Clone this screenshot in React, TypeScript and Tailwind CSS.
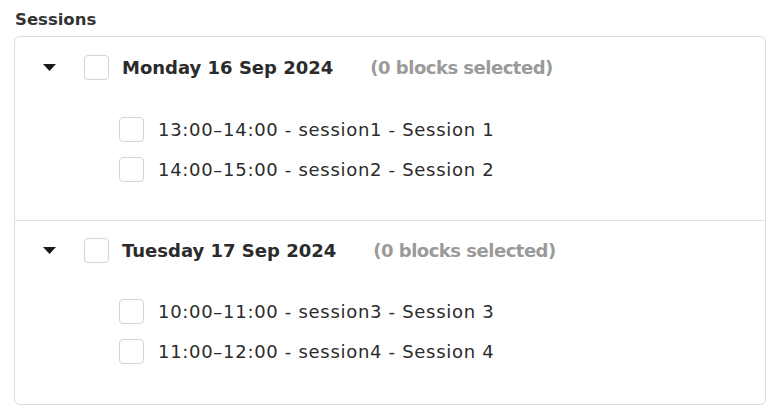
const days = [
  {
    label: 'Monday 16 Sep 2024',
    sessions: ['13:00–14:00 - session1 - Session 1', '14:00–15:00 - session2 - Session 2'],
  },
  {
    label: 'Tuesday 17 Sep 2024',
    sessions: ['10:00–11:00 - session3 - Session 3', '11:00–12:00 - session4 - Session 4'],
  },
];

function Box() {
  return <span className="block w-[25px] h-[25px] shrink-0 rounded-[4px] border border-[#d4d4d4] bg-white" />;
}

export default function App() {
  return (
    <div className="w-[778px] h-[417px] bg-white pt-[9px] text-[#2b2b2b]" style={{ fontFamily: '"DejaVu Sans", sans-serif' }}>
      <div className="pl-[15px] text-[16.5px] font-bold leading-[22px] text-[#333]">Sessions</div>
      <div className="ml-[14px] mr-[12px] mt-[5px] rounded-[6px] border border-[#dadada]">
        {days.map((day, i) => (
          <div key={day.label} className={i === 0 ? 'pt-[17px] pb-[31px] border-b border-[#e2e2e2]' : 'pt-[16px] pb-[33px]'}>
            <div className="flex items-center h-[27px] pl-[28px]">
              <svg width="13" height="7" viewBox="0 0 13 7" className="shrink-0">
                <path d="M0 0 L13 0 L6.5 7 Z" fill="#1a1a1a" />
              </svg>
              <span className="ml-[28px]"><Box /></span>
              <span className="ml-[13px] text-[18px] font-bold">{day.label}</span>
              <span className="ml-[37px] text-[18px] font-bold tracking-[-0.5px] text-[#9a9a9a]">(0 blocks selected)</span>
            </div>
            <div className={i === 0 ? 'mt-[28px]' : 'mt-[27px]'}>
              {day.sessions.map((s) => (
                <div key={s} className="flex items-center h-[40px] pl-[104px]">
                  <Box />
                  <span className="ml-[14px] text-[18px] tracking-[0.7px]">{s}</span>
                </div>
              ))}
            </div>
          </div>
        ))}
      </div>
    </div>
  );
}
